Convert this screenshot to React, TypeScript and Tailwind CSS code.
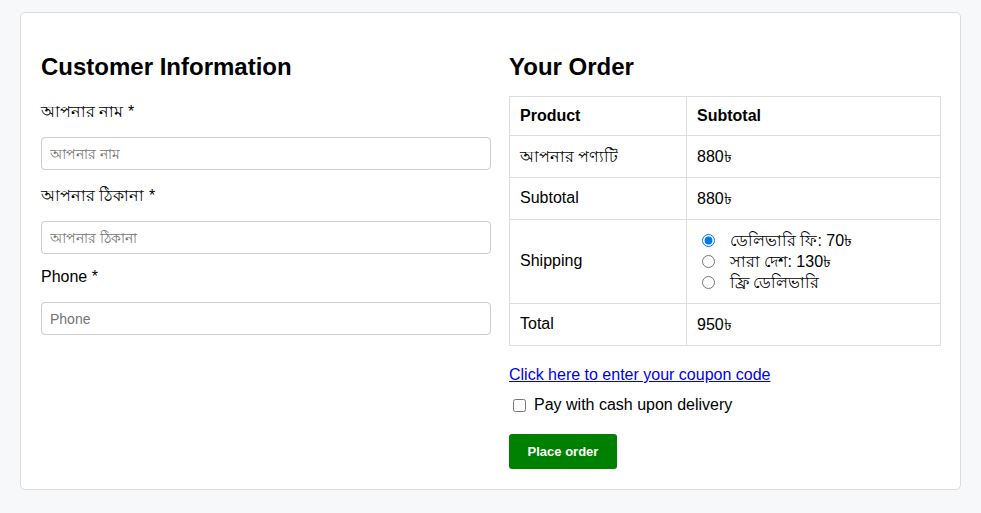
import { useState } from 'react';

const font = { fontFamily: '"Liberation Sans", Arial, "Noto Sans", sans-serif' };

const shippingOptions = [
  { id: 'inside', label: 'ডেলিভারি ফি: 70৳' },
  { id: 'nationwide', label: 'সারা দেশ: 130৳' },
  { id: 'free', label: 'ফ্রি ডেলিভারি' },
];

function Field({ label, placeholder, tall }: { label: string; placeholder: string; tall?: boolean }) {
  return (
    <div className="mb-[11px]">
      <label className={`block text-base leading-6 text-black mb-[13px] ${tall ? 'pt-[3px]' : ''}`}>{label} *</label>
      <input
        type="text"
        placeholder={placeholder}
        className="block w-full h-[33px] px-2 text-sm border border-[#ccc] rounded-[4px] bg-white placeholder:text-[#757575] outline-none"
      />
    </div>
  );
}

export default function App() {
  const [shipping, setShipping] = useState('inside');

  return (
    <div className="min-h-screen bg-[#f7f8fa] px-5 pt-3 pb-6" style={font}>
      <div className="bg-white border border-[#dcdcdc] rounded-[5px] px-5 pt-10 pb-5">
        <div className="grid grid-cols-[450px_432px] gap-[18px]">
          {/* Customer Information */}
          <div>
            <h2 className="text-2xl leading-7 font-bold text-black mb-4">Customer Information</h2>
            <Field label="আপনার নাম" placeholder="আপনার নাম" tall />
            <Field label="আপনার ঠিকানা" placeholder="আপনার ঠিকানা" tall />
            <Field label="Phone" placeholder="Phone" />
          </div>

          {/* Your Order */}
          <div>
            <h2 className="text-2xl leading-7 font-bold text-black mb-[15px]">Your Order</h2>
            <table className="w-full border-collapse text-base text-black">
              <tbody>
                <tr className="h-[39px]">
                  <th className="w-[177px] border border-[#ddd] px-[10px] text-left font-bold">Product</th>
                  <th className="border border-[#ddd] px-[10px] text-left font-bold">Subtotal</th>
                </tr>
                <tr className="h-[42px]">
                  <td className="border border-[#ddd] px-[10px]">আপনার পণ্যটি</td>
                  <td className="border border-[#ddd] px-[10px]">880৳</td>
                </tr>
                <tr className="h-[42px]">
                  <td className="border border-[#ddd] px-[10px] pb-[2px]">Subtotal</td>
                  <td className="border border-[#ddd] px-[10px]">880৳</td>
                </tr>
                <tr className="h-[84px]">
                  <td className="border border-[#ddd] px-[10px] pb-[2px]">Shipping</td>
                  <td className="border border-[#ddd] px-[10px]">
                    <div className="flex flex-col">
                      {shippingOptions.map((opt) => (
                        <label key={opt.id} className="flex items-center h-[21px] cursor-pointer">
                          <input
                            type="radio"
                            name="shipping"
                            checked={shipping === opt.id}
                            onChange={() => setShipping(opt.id)}
                            className="ml-[5px] mr-[15px] w-[13px] h-[13px] accent-[#0075ff]"
                          />
                          <span>{opt.label}</span>
                        </label>
                      ))}
                    </div>
                  </td>
                </tr>
                <tr className="h-[42px]">
                  <td className="border border-[#ddd] px-[10px] pb-[2px]">Total</td>
                  <td className="border border-[#ddd] px-[10px]">950৳</td>
                </tr>
              </tbody>
            </table>

            <a href="#" className="block mt-[19px] text-base leading-5 text-[#0000ee] underline">
              Click here to enter your coupon code
            </a>
            <label className="flex items-center mt-[10px] text-base leading-5 text-black">
              <input type="checkbox" className="ml-1 mr-[8px] w-[13px] h-[13px]" />
              Pay with cash upon delivery
            </label>
            <button className="mt-[19px] h-[35px] w-[108px] bg-[#008000] text-white text-[13px] font-bold rounded-[3px]">
              Place order
            </button>
          </div>
        </div>
      </div>
    </div>
  );
}
